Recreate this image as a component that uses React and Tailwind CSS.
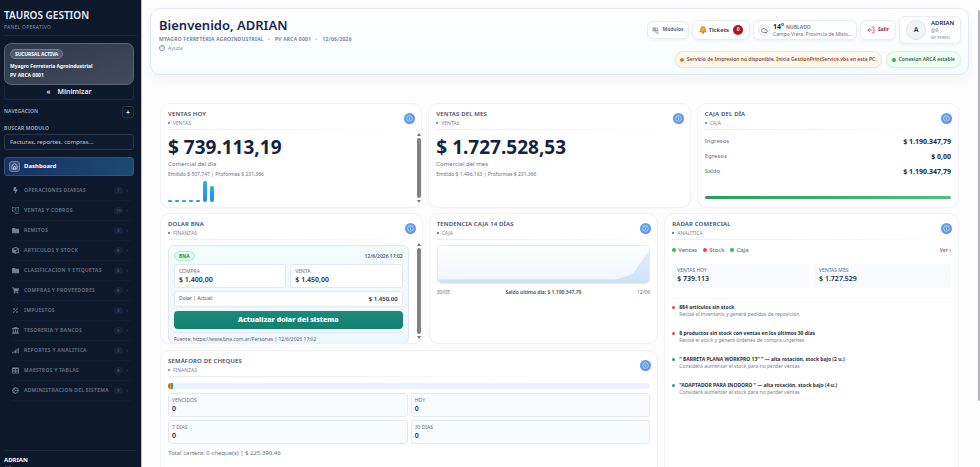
import React from 'react'
import clsx from 'clsx'
import { Cloud, House, LogOut } from 'lucide-react'
import { FaBolt, FaCube, FaFolder, FaLandmark, FaShoppingCart, FaSignal, FaTable } from 'react-icons/fa'
import { BsCashCoin, BsGearWideConnected, BsPercent } from 'react-icons/bs'

const NAV = [
  { label: 'Operaciones diarias', count: 7, icon: FaBolt },
  { label: 'Ventas y cobros', count: 10, icon: BsCashCoin },
  { label: 'Remitos', count: 3, icon: FaFolder },
  { label: 'Articulos y stock', count: 6, icon: FaCube },
  { label: 'Clasificacion y etiquetas', count: 6, icon: FaFolder },
  { label: 'Compras y proveedores', count: 6, icon: FaShoppingCart },
  { label: 'Impuestos', count: 3, icon: BsPercent },
  { label: 'Tesoreria y bancos', count: 5, icon: FaLandmark },
  { label: 'Reportes y analitica', count: 2, icon: FaSignal },
  { label: 'Maestros y tablas', count: 8, icon: FaTable },
  { label: 'Administracion del sistema', count: 9, icon: BsGearWideConnected },
]

const ALERTS = [
  { dot: 'bg-[#dc4a4f]', title: '884 artículos sin stock', text: 'Revisá el inventario y generá pedidos de reposición' },
  { dot: 'bg-[#dc4a4f]', title: '8 productos sin stock con ventas en los últimos 30 días', text: 'Revisá el stock y generá órdenes de compra urgentes' },
  { dot: 'bg-[#2a9d7c]', title: '" BARRETA PLANA WORKPRO 13" " — alta rotación, stock bajo (2 u.)', text: 'Considerá aumentar el stock para no perder ventas' },
  { dot: 'bg-[#2a9d7c]', title: '"ADAPTADOR PARA INODORO " — alta rotación, stock bajo (4 u.)', text: 'Considerá aumentar el stock para no perder ventas' },
]

const BARS = [2, 2, 2, 2, 2, 21, 16]

function Sidebar() {
  return (
    <aside className="flex w-[142px] shrink-0 flex-col border-r border-[#b9bec8] bg-[#0d182b] px-1 text-white">
      <div className="border-b border-[#1a2538] pt-[9px] pb-1">
        <div className="text-[10px] leading-[13px] font-semibold text-[#e9eef7]">TAUROS GESTION</div>
        <div className="mt-px text-[5px] leading-[8px] tracking-wider text-[#8390a6]">PANEL OPERATIVO</div>
      </div>

      <div className="mt-[7px] mr-[3px] flex h-[42px] flex-col items-start rounded-[7px] border border-[#59647a] bg-linear-to-br from-[#2f394d] to-[#424a5c] px-[5px] pt-[5px]">
        <span className="rounded-full border border-[#727b8c] bg-[#535c6e] px-1 text-[5px] leading-[8px] font-bold tracking-tight">SUCURSAL ACTIVA</span>
        <div className="mt-[3px] text-[5px] leading-[9px] font-bold">Myagro Ferreteria Agroindustrial</div>
        <div className="text-[5px] leading-[9px] font-bold">PV ARCA 0001</div>
      </div>
      <button className="mr-[3px] flex h-[15px] items-center justify-center gap-[7px] rounded-b-[3px] border border-t-0 border-[#1c283d] text-[7px] font-semibold text-[#eef2f8]">
        <span>«</span> Minimizar
      </button>

      <div className="mt-[6px] mr-[3px] flex items-center justify-between">
        <span className="text-[5px] font-semibold tracking-wide text-[#a9b4c6]">NAVEGACION</span>
        <button className="flex size-3 items-center justify-center rounded-[3px] border border-[#29354a] text-[7px] leading-none font-bold" aria-label="Agregar">+</button>
      </div>

      <label htmlFor="modulo" className="mt-[6px] text-[5px] leading-[8px] font-semibold tracking-wide text-[#a9b4c6]">BUSCAR MODULO</label>
      <input id="modulo" placeholder="Facturas, reportes, compras..." className="mt-[2px] mr-[3px] h-4 rounded-[3px] border border-[#2a364b] bg-[#0f1a2e] px-[5px] text-[6px] placeholder:text-[#c0c9d8]" />

      <a href="#dashboard" className="mt-[7px] mr-[3px] flex h-[19px] items-center gap-1 rounded-[3px] border border-[#2c5380] bg-linear-to-r from-[#183064] to-[#1b4a73] px-1 text-[6px] font-bold">
        <span className="flex size-[11px] items-center justify-center rounded-[3px] border border-[#6c80ab] bg-[#3c5080]">
          <House className="size-[7px]" />
        </span>
        Dashboard
      </a>

      <nav className="mt-[5px] flex flex-col pr-[6px] pl-2">
        {NAV.map(({ label, count, icon: Icon }) => (
          <a key={label} href="#modulo" className="flex h-5 items-center border-b border-[#121e32] text-[#5f6a7e]">
            <Icon className="size-[7px] shrink-0 text-[#737e91]" />
            <span className="ml-[5px] flex-1 text-[5px] font-bold tracking-wider whitespace-nowrap uppercase">{label}</span>
            <span className="w-[9px] rounded-full bg-[#17233a] text-center text-[4px] leading-[7px]">{count}</span>
            <span className="w-2 text-center text-[5px]">›</span>
          </a>
        ))}
      </nav>

      <div className="mt-auto h-[17px] overflow-hidden border-t border-[#1a2538] pt-[5px] text-[6px] leading-[9px] font-bold">
        ADRIAN
        <div className="text-[5px] leading-[7px] font-normal text-[#8390a6]">@9</div>
      </div>
    </aside>
  )
}

function BellIcon() {
  return (
    <svg viewBox="0 0 16 16" className="size-2">
      <path d="M8 1.2c-2.9 0-4.5 2-4.5 4.8 0 3.4-1 4.6-2 6h13c-1-1.400-2-2.600-2-6 0-2.800-1.600-4.800-4.500-4.800z" fill="#f2b51d" stroke="#7b5a1c" strokeWidth="1" />
      <circle cx="8" cy="13.500" r="1.700" fill="#8a6218" />
    </svg>
  )
}

function ModulesIcon() {
  return (
    <svg viewBox="0 0 16 16" className="size-[7px]">
      <path d="M1 1h9v9H1z" fill="#a3aac8" />
      <path d="M6 8h9M6 11.500h9M10 14.500h5M12.500 1v6" stroke="#7680a6" strokeWidth="1.500" />
    </svg>
  )
}

const chip = 'flex items-center rounded-[6px] border border-[#e8edf3] bg-white shadow-[0_1px_3px_rgba(30,41,90,0.06)]'

function Header() {
  return (
    <header className="mt-2 flex justify-between rounded-[10px] border border-[#e3e9f0] bg-linear-to-b from-white to-[#f7fdfe] pt-[7px] pr-[7px] pb-[6px] pl-2 shadow-[0_5px_12px_rgba(30,41,90,0.05)]">
      <div>
        <h1 className="text-[13px] leading-[18px] font-semibold text-[#1b2450]">Bienvenido, ADRIAN</h1>
        <div className="mt-px flex gap-1 text-[5px] leading-[8px] font-semibold tracking-wider text-[#6b7488]">
          <span>MYAGRO FERRETERIA AGROINDUSTRIAL</span>
          <span className="text-[#b3bac8]">•</span>
          <span className="ml-px">PV ARCA 0001</span>
          <span className="text-[#b3bac8]">•</span>
          <span className="ml-px">12/06/2026</span>
        </div>
        <a href="#ayuda" className="mt-px flex items-center gap-[3px] text-[5px] leading-[8px] text-[#8d95a5]">
          <span className="flex size-[6px] items-center justify-center rounded-full border border-[#8d95a5] text-[4px] leading-none">?</span>
          Ayuda
        </a>
      </div>

      <div className="flex flex-col items-end gap-[7px]">
        <div className="flex items-center gap-[3px]">
          <button className={clsx(chip, 'h-[18px] gap-[3px] px-1 text-[5px] font-semibold text-[#4c5568]')}>
            <ModulesIcon /> Módulos
          </button>
          <button className={clsx(chip, 'h-5 gap-[2px] px-[6px] text-[6px] font-semibold text-[#283044]')}>
            <BellIcon /> Tickets
            <span className="ml-[2px] flex size-[10px] items-center justify-center rounded-full bg-[#b3151d] text-[5px] text-white">0</span>
          </button>
          <div className={clsx(chip, 'h-5 gap-[3px] px-1')}>
            <span className="flex size-3 shrink-0 items-center justify-center rounded-full border border-[#e1e7f0] bg-[#f3f6fb]">
              <Cloud className="size-[7px] text-[#4c5568]" />
            </span>
            <div>
              <div className="flex items-baseline gap-[2px] text-[5px] leading-[8px] font-semibold text-[#667085]">
                <span className="text-[7px] font-bold text-[#20293c]">14°</span> NUBLADO
              </div>
              <div className="text-[5px] leading-[7px] whitespace-nowrap text-[#667085]">Campo Viera, Provincia de Misio...</div>
            </div>
          </div>
          <button className={clsx(chip, 'h-5 gap-[3px] px-[6px] text-[5px] font-bold text-[#a3213b]')}>
            <LogOut className="size-2 rotate-180" /> Salir
          </button>
          <a href="#perfil" className={clsx(chip, 'h-7 w-[62px] gap-[5px] px-[6px]')}>
            <span className="flex size-5 shrink-0 items-center justify-center rounded-full border border-[#dde4ed] bg-[#f0f4f8] text-[7px] font-semibold text-[#29344a]">A</span>
            <span className="flex flex-col text-[5px] leading-[7px] text-[#7c8699]">
              <b className="text-[6px] font-semibold text-[#20293c]">ADRIAN</b>
              <span>@9</span>
              <span className="text-[4px] tracking-wide whitespace-nowrap">MI PERFIL</span>
            </span>
          </a>
        </div>
        <div className="flex gap-1 text-[5px] font-semibold">
          <div className="flex h-[17px] items-center gap-[3px] rounded-full border border-[#fbe0c5] bg-[#fff8ef] px-1 text-[#8d4526] shadow-[0_1px_3px_rgba(30,41,90,0.06)]">
            <i className="size-1 rounded-full bg-[#e8742a]" />
            Servicio de Impresion no disponible. Inicia GestionPrintService.vbs en esta PC.
          </div>
          <div className="flex h-[17px] items-center gap-[3px] rounded-full border border-[#d0f3df] bg-[#f0fdf5] px-[5px] text-[#286a4c] shadow-[0_1px_3px_rgba(30,41,90,0.06)]">
            <i className="size-1 rounded-full bg-[#2eb85c]" />
            Conexion ARCA estable
          </div>
        </div>
      </div>
    </header>
  )
}

function InfoButton() {
  return (
    <button aria-label="Informacion" className="flex size-[11px] items-center justify-center rounded-full bg-linear-to-br from-[#4fb0ee] to-[#6d84e6]">
      <svg viewBox="0 0 16 16" className="size-[7px]" fill="none" stroke="#d9ebfc">
        <circle cx="8" cy="8" r="6.500" strokeWidth="1.500" />
        <path d="M8 7v4.500M8 4.200v1.600" strokeWidth="1.800" />
      </svg>
    </button>
  )
}

function Card({ title, tag, dot = 'bg-[#3b6fe0]', className, scroll, children }) {
  return (
    <section className={clsx('flex flex-col overflow-hidden rounded-[10px] border border-[#f0f3f7] bg-white pt-[6px] pl-[7px] shadow-[0_1px_3px_rgba(30,41,90,0.02)]', className)}>
      <div className="mr-[6px] flex items-center justify-between">
        <div>
          <h2 className="text-[6px] leading-[9px] font-semibold tracking-wide text-[#3f4a5e] uppercase">{title}</h2>
          <div className="flex items-center gap-[3px] text-[5px] leading-[8px] text-[#7c8699] uppercase">
            <i className={clsx('size-[2px] rounded-full', dot)} />
            {tag}
          </div>
        </div>
        <InfoButton />
      </div>
      <div className="mt-[2px] mr-[7px] h-px shrink-0 bg-linear-to-r from-[#e8ebf0] to-transparent" />
      <div className="flex min-h-0 flex-1">
        <div className={clsx('min-w-0 flex-1', !scroll && 'mr-[7px]')}>{children}</div>
        {scroll && (
          <div className="mt-[3px] mb-1 flex w-[5px] shrink-0 flex-col items-center">
            <i className="border-x-2 border-b-3 border-x-transparent border-b-[#777]" />
            <i className="my-[2px] w-1 flex-1 rounded-full bg-[#828282]" />
            <i className="border-x-2 border-t-3 border-x-transparent border-t-[#777]" />
          </div>
        )}
      </div>
    </section>
  )
}

function Stat({ label, value, className }) {
  return (
    <div className={clsx('h-6 rounded-[3px] pt-[2px]', className)}>
      <div className="text-[5px] leading-[8px] text-[#667085]">{label}</div>
      <div className="text-[7px] leading-[10px] font-semibold text-[#222d42]">{value}</div>
    </div>
  )
}

function Total({ value, label, detail }) {
  return (
    <>
      <div className="mt-1 text-[19px] leading-[26px] font-bold text-[#15233c]">{value}</div>
      <div className="text-[6px] leading-[8px] text-[#667085]">{label}</div>
      <div className="mt-[2px] text-[5px] leading-[8px] text-[#667085]">{detail}</div>
    </>
  )
}

function DolarBna() {
  return (
    <div className="mt-[5px] mr-2 rounded-[6px] border border-[#dfe8f2] bg-linear-to-b from-[#f2fcf9] to-[#eff6ff] px-[5px] pt-[5px]">
      <div className="flex items-center justify-between">
        <span className="rounded-full border border-[#b7ecd0] bg-[#dcf9e9] px-1 text-[5px] leading-[8px] font-semibold text-[#257250]">BNA</span>
        <span className="text-[5px] leading-[8px] font-semibold text-[#505b70]">12/6/2026 17:02</span>
      </div>
      <div className="mt-[3px] grid grid-cols-2 gap-1">
        <Stat label="COMPRA" value="$ 1.400,00" className="border border-[#e3e8f0] bg-white px-1" />
        <Stat label="VENTA" value="$ 1.450,00" className="border border-[#e3e8f0] bg-white px-1" />
      </div>
      <div className="mt-[3px] flex h-4 items-center justify-between rounded-[3px] border border-[#e3e8f0] bg-white px-1 text-[5px] text-[#4c5568]">
        Dolar | Actual:
        <b className="text-[6px] font-semibold text-[#222d42]">$ 1.450,00</b>
      </div>
      <button className="mt-1 block h-[18px] w-full rounded-[4px] bg-linear-to-b from-[#198a7d] to-[#17806f] text-[7px] font-black text-white">Actualizar dolar del sistema</button>
      <div className="mt-[3px] border-t border-[#dfe6ef] pt-[2px] text-[5px] leading-[8px] text-[#5b667b]">
        Fuente: https://www.bna.com.ar/Personas | 12/6/2026 17:02
      </div>
    </div>
  )
}

function Tendencia() {
  return (
    <>
      <svg viewBox="0 0 214 39" preserveAspectRatio="none" className="mt-[5px] h-[39px] w-full rounded-[5px] border border-[#e0eaf5]">
        <defs>
          <linearGradient id="fondo" x1="0" y1="0" x2="0" y2="1">
            <stop offset="0" stopColor="#ffffff" />
            <stop offset="1" stopColor="#edf5fd" />
          </linearGradient>
          <linearGradient id="area" x1="0" y1="0" x2="0" y2="1">
            <stop offset="0" stopColor="#e0edfa" />
            <stop offset="1" stopColor="#cfe2f6" />
          </linearGradient>
        </defs>
        <rect width="214" height="39" fill="url(#fondo)" />
        <path d="M0 35H180Q190 33 197 29L214 4V39H0Z" fill="url(#area)" />
      </svg>
      <div className="mt-1 flex justify-between text-[5px] leading-[8px] text-[#667085]">
        <span>30/05</span>
        <b className="font-semibold text-[#3a4965]">Saldo ultimo dia: $ 1.190.347,79</b>
        <span>12/06</span>
      </div>
    </>
  )
}

function Radar() {
  return (
    <>
      <div className="mt-[6px] flex items-center gap-[6px] text-[6px] leading-[8px] text-[#505b70]">
        {[['Ventas', 'bg-[#2eb85c]'], ['Stock', 'bg-[#dc4a4f]'], ['Caja', 'bg-[#2eb85c]']].map(([name, color]) => (
          <span key={name} className="flex items-center gap-[2px]">
            <i className={clsx('size-1 rounded-full', color)} />
            {name}
          </span>
        ))}
        <a href="#radar" className="ml-auto text-[5px] font-semibold text-[#b9532f]">Ver ›</a>
      </div>
      <div className="mt-[10px] grid grid-cols-2 gap-[5px]">
        <Stat label="VENTAS HOY" value="$ 739.113" className="bg-[#f8fafc] px-[5px]" />
        <Stat label="VENTAS MES" value="$ 1.727.529" className="bg-[#f8fafc] px-[5px]" />
      </div>
      <ul className="mt-[10px] border-t border-[#f5f6f8] pt-1">
        {ALERTS.map((a) => (
          <li key={a.title} className="flex h-[26px] gap-1">
            <i className={clsx('mt-[3px] size-[3px] rounded-full', a.dot)} />
            <div>
              <div className="text-[5px] leading-[8px] font-bold text-[#29303f]">{a.title}</div>
              <div className="text-[5px] leading-[6px] text-[#788295]">{a.text}</div>
            </div>
          </li>
        ))}
      </ul>
    </>
  )
}

function Cheques() {
  return (
    <>
      <div className="mt-[6px] flex h-[6px] overflow-hidden rounded-full bg-[#eaf3fc]">
        <i className="w-[2px] bg-[#d9544f]" />
        <i className="w-px bg-[#e2a93b]" />
        <i className="w-[2px] bg-[#3aa364]" />
      </div>
      <div className="mt-1 grid grid-cols-2 gap-[3px]">
        {['VENCIDOS', 'HOY', '7 DIAS', '30 DIAS'].map((l) => (
          <Stat key={l} label={l} value="0" className="border border-[#e1eaf3] bg-[#f9fcff] px-[3px]" />
        ))}
      </div>
      <div className="mt-[5px] text-[6px] leading-[9px] text-[#667085]">Total cartera: 0 cheque(s) | $ 225.390,46</div>
    </>
  )
}

export default function App() {
  return (
    <div className="flex h-screen overflow-hidden bg-[#fdfdfe] font-['Noto_Sans','Open_Sans',sans-serif]">
      <Sidebar />
      <main className="min-w-0 flex-1 overflow-hidden pr-[9px] pl-2">
        <Header />
        <div className="mx-[10px] mt-[28px] grid gap-[5px]">
          <div className="grid grid-cols-3 gap-[6px]">
            <Card title="Ventas hoy" tag="Ventas" className="h-[105px]" scroll>
              <Total value="$ 739.113,19" label="Comercial del día" detail="Emitido $ 507.747 | Proformas $ 231.366" />
              <div className="mt-[3px] flex h-[21px] items-end gap-[3px]">
                {BARS.map((h, i) => (
                  <i key={i} className="w-1 rounded-[2px] bg-linear-to-b from-[#2fb0d8] to-[#2a86ee]" style={{ height: h }} />
                ))}
              </div>
            </Card>
            <Card title="Ventas del mes" tag="Ventas">
              <Total value="$ 1.727.528,53" label="Comercial del mes" detail="Emitido $ 1.496.163 | Proformas $ 231.366" />
            </Card>
            <Card title="Caja del día" tag="Caja" dot="bg-[#5b5fa8]">
              <dl className="mt-1 text-[7px] leading-[15px] text-[#667085]">
                {[['Ingresos', '$ 1.190.347,79'], ['Egresos', '$ 0,00'], ['Saldo', '$ 1.190.347,79']].map(([k, v]) => (
                  <div key={k} className="flex justify-between">
                    <dt className="text-[6px]">{k}</dt>
                    <dd className="font-bold text-[#1d2a44]">{v}</dd>
                  </div>
                ))}
              </dl>
              <div className="mt-[17px] h-[3px] rounded-full bg-linear-to-r from-[#2a9d63] to-[#52bd80]" />
            </Card>
          </div>

          <div className="grid grid-cols-[262fr_229fr_294fr] gap-[6px]">
            <Card title="Dolar BNA" tag="Finanzas" dot="bg-[#6a4be0]" className="h-[131px]" scroll>
              <DolarBna />
            </Card>
            <Card title="Tendencia caja 14 días" tag="Caja" dot="bg-[#475569]">
              <Tendencia />
            </Card>
            <Card title="Radar comercial" tag="Analítica" dot="bg-[#475569]" className="row-span-2">
              <Radar />
            </Card>
            <Card title="Semáforo de cheques" tag="Finanzas" dot="bg-[#dc4a6a]" className="col-span-2 min-h-[140px]">
              <Cheques />
            </Card>
          </div>
        </div>
      </main>
      <div className="mt-[10px] h-[391px] w-[2px] shrink-0 rounded-full bg-[#b5b5b8]" />
    </div>
  )
}
